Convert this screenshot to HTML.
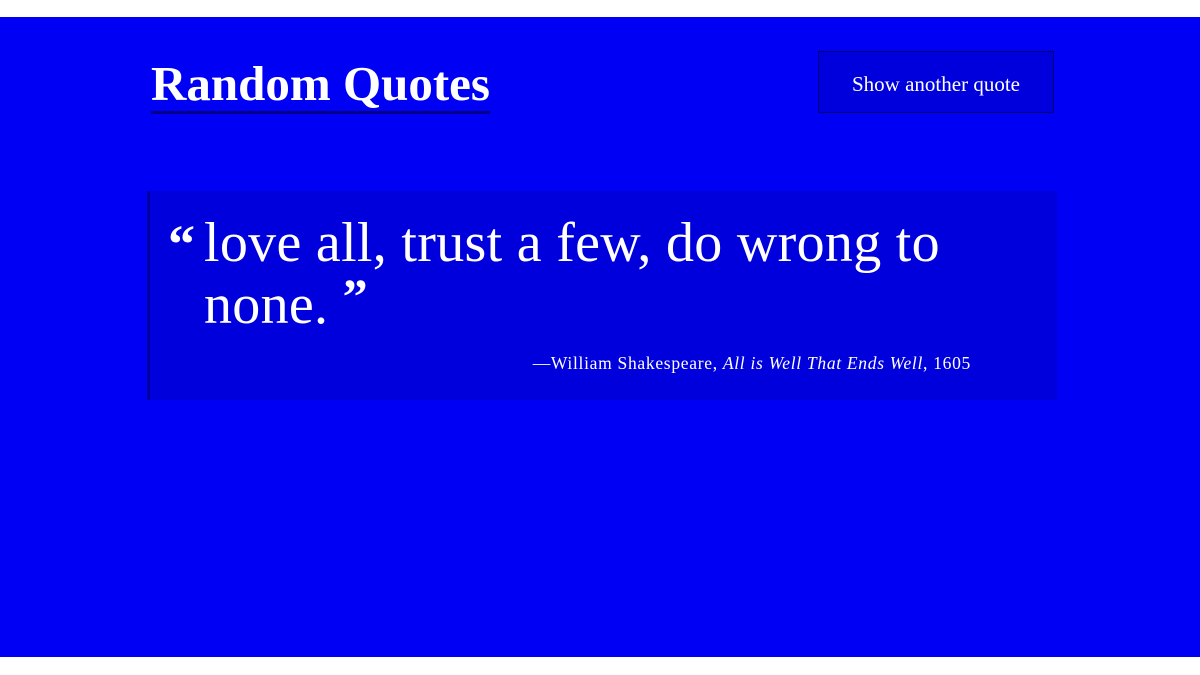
<!DOCTYPE html>
<html><head><meta charset="utf-8"><style>
html,body{margin:0;padding:0;background:#fff;}
body{width:1200px;height:675px;position:relative;overflow:hidden;font-family:"Liberation Serif",serif;color:#fff;}
.bg{position:absolute;left:0;top:17px;width:1200px;height:640px;background:#0000f5;}
.title{position:absolute;left:151px;top:56px;font-size:49px;font-weight:bold;line-height:56px;white-space:nowrap;}
.uline{position:absolute;left:151px;top:111px;width:339px;height:3px;background:#00008a;}
.btn{position:absolute;left:818px;top:51px;width:234px;height:60px;background:#0000dd;border:1px solid #00006a;border-radius:2px;font-size:21px;text-align:center;line-height:64px;}
.box{position:absolute;left:147px;top:191px;width:907px;height:209px;background:#0000dd;border-left:3px solid #0000a0;}
.oq{position:absolute;left:168px;top:214px;font-size:54px;font-weight:bold;line-height:60px;}
.q{position:absolute;left:204px;top:212px;width:850px;font-size:56px;line-height:62px;letter-spacing:0.3px;white-space:nowrap;}
.cq{font-weight:bold;font-size:50px;vertical-align:10px;line-height:0;}
.attr{position:absolute;right:229px;top:353px;font-size:17.5px;letter-spacing:0.7px;white-space:nowrap;}
</style></head><body>
<div class="bg"></div>
<div class="title">Random Quotes</div>
<div class="uline"></div>
<div class="btn">Show another quote</div>
<div class="box"></div>
<div class="oq">“</div>
<div class="q">love all, trust a few, do wrong to<br>none. <span class="cq">”</span></div>
<div class="attr">—William Shakespeare, <i>All is Well That Ends Well</i>, 1605</div>
</body></html>
